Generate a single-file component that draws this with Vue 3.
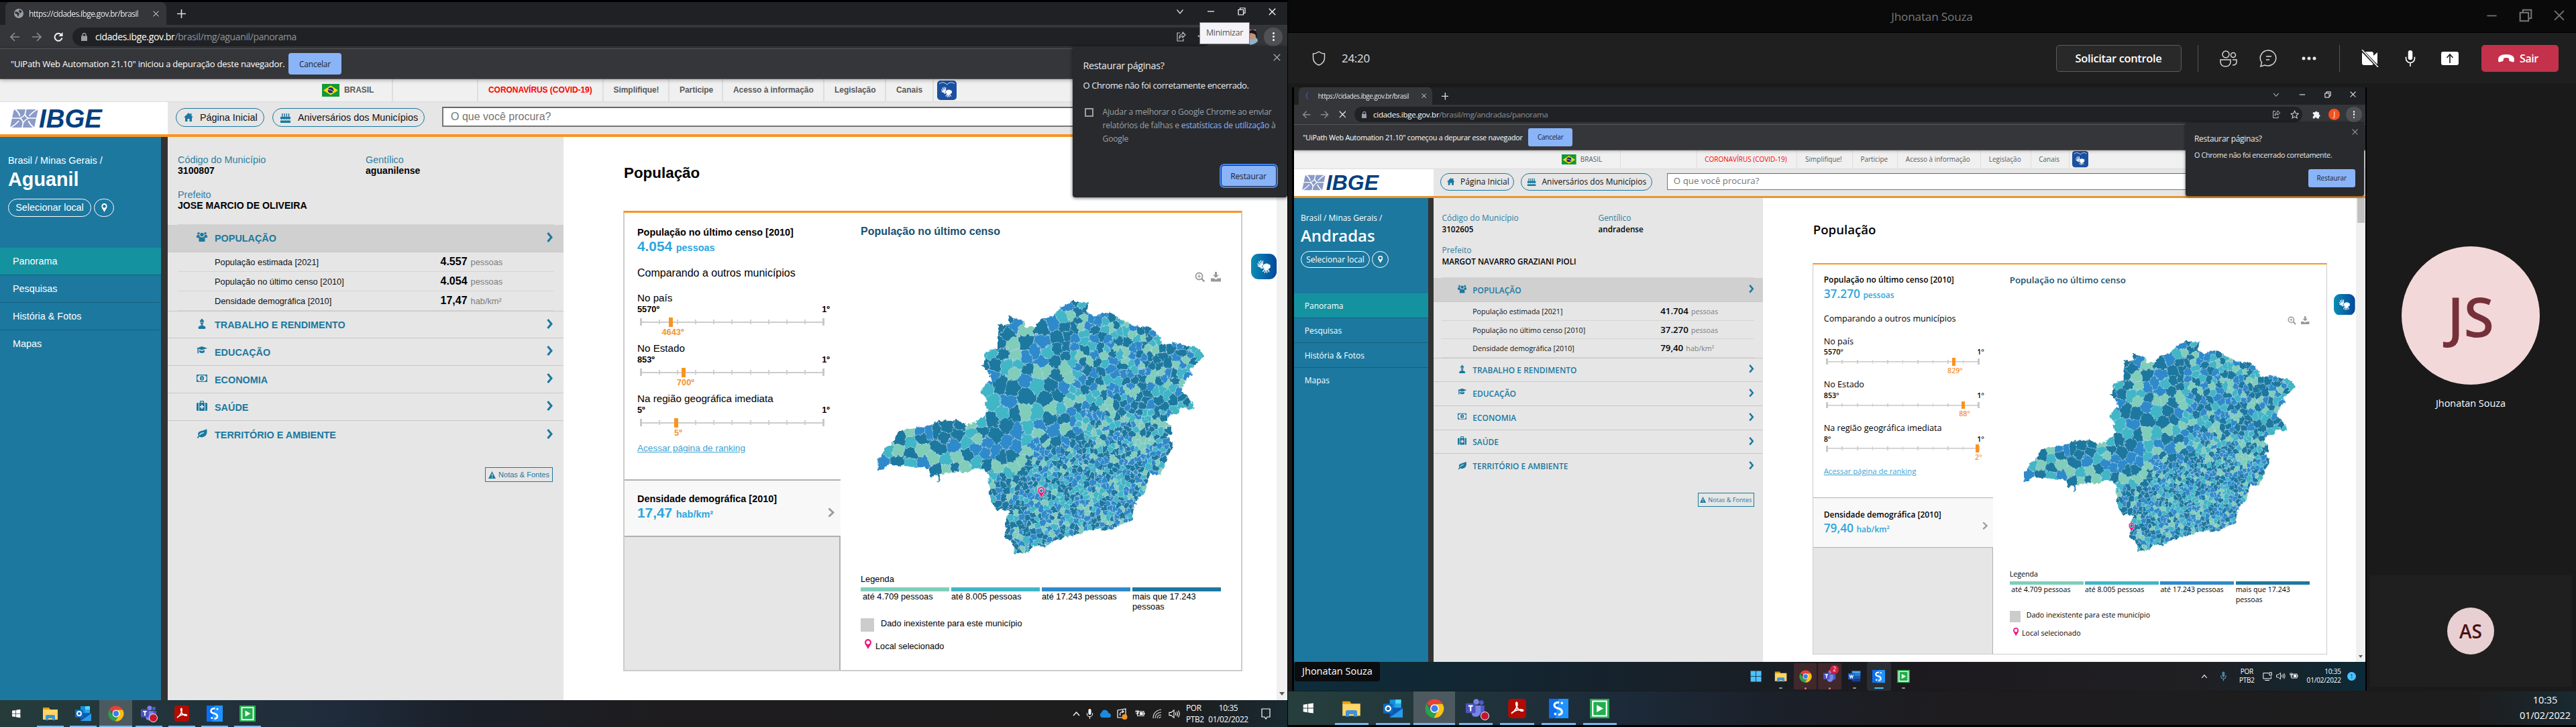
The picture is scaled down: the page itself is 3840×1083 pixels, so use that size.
<script setup>
const pages = [
  {
    id: 'aguanil',
    tab: 'https://cidades.ibge.gov.br/brasil',
    path: '/brasil/mg/aguanil/panorama',
    loading: false,
    info: '"UiPath Web Automation 21.10" iniciou a depuração deste navegador.',
    gov: [586, 127, 186.5, 98.5, 80, 151, 92, 70.6],
    city: 'Aguanil',
    code: '3100807',
    people: 'aguanilense',
    mayor: 'JOSE MARCIO DE OLIVEIRA',
    stats: [['População estimada [2021]', '4.557', 'pessoas'], ['População no último censo [2010]', '4.054', 'pessoas'], ['Densidade demográfica [2010]', '17,47', 'hab/km²']],
    census: '4.054',
    density: '17,47',
    ranks: [
      { name: 'No país', from: '5570º', at: 46, value: '4643º', lab: 53 },
      { name: 'No Estado', from: '853º', at: 65, value: '700º', lab: 72 },
      { name: 'Na região geográfica imediata', from: '5º', at: 54, value: '5º', lab: 61 }
    ],
    pin: [695, 990]
  },
  {
    id: 'andradas',
    tab: 'https://cidades.ibge.gov.br/brasil',
    path: '/brasil/mg/andradas/panorama',
    loading: true,
    info: '"UiPath Web Automation 21.10" começou a depurar esse navegador',
    gov: [585, 137, 180, 99, 81, 149, 89.5, 68.5],
    city: 'Andradas',
    code: '3102605',
    people: 'andradense',
    mayor: 'MARGOT NAVARRO GRAZIANI PIOLI',
    stats: [['População estimada [2021]', '41.704', 'pessoas'], ['População no último censo [2010]', '37.270', 'pessoas'], ['Densidade demográfica [2010]', '79,40', 'hab/km²']],
    census: '37.270',
    density: '79,40',
    ranks: [
      { name: 'No país', from: '5570º', at: 229, value: '829º', lab: 235 },
      { name: 'No Estado', from: '853º', at: 246, value: '88º', lab: 252 },
      { name: 'Na região geográfica imediata', from: '8º', at: 271, value: '2º', lab: 277 }
    ],
    pin: [574, 1099]
  }
]
const govItems = ['CORONAVÍRUS (COVID-19)', 'Simplifique!', 'Participe', 'Acesso à informação', 'Legislação', 'Canais']
const nav = ['Panorama', 'Pesquisas', 'História & Fotos', 'Mapas']
const themes = [['TRABALHO E RENDIMENTO', 'worker'], ['EDUCAÇÃO', 'cap'], ['ECONOMIA', 'money'], ['SAÚDE', 'health'], ['TERRITÓRIO E AMBIENTE', 'leaf']]
const palette = ['#80cdba', '#41b6c6', '#2f8aca', '#1c789f']
const legend = ['até 4.709 pessoas', 'até 8.005 pessoas', 'até 17.243 pessoas', 'mais que 17.243 pessoas']
const dock = ['explorer', 'outlook', 'chrome', 'teams', 'acrobat', 'ess', 'play']
const dock11 = ['win11', 'explorer', 'chrome', 'teams', 'word', 'ess', 'play']

// State outline, clockwise from the northern tip
const outline = [812,331,863,338,856,372,892,384,905,375,922,371,950,376,985,397,1018,413,1045,420,1073,416,1092,432,1116,453,1120,475,1145,476,1175,470,1205,481,1235,486,1257,493,1271,514,1258,532,1240,546,1222,560,1230,582,1205,590,1198,610,1195,635,1220,655,1237,690,1215,692,1190,688,1176,709,1150,712,1135,735,1150,745,1160,775,1140,785,1160,810,1158,830,1140,850,1135,875,1118,912,1080,912,1070,935,1062,975,1035,990,1020,1030,1020,1062,985,1075,935,1097,870,1095,820,1112,775,1122,735,1137,705,1152,665,1150,655,1165,625,1178,597,1175,600,1155,585,1135,563,1120,570,1100,566,1080,572,1055,585,1035,560,1028,537,1032,518,1000,510,970,515,950,505,935,510,915,490,895,470,888,440,903,420,907,400,900,345,908,338,910,337,935,330,933,328,912,316,913,305,922,297,905,300,888,270,888,235,886,190,880,160,878,117,898,115,860,130,850,140,820,165,812,190,768,215,762,245,758,275,750,300,750,325,735,360,730,400,731,432,745,460,738,490,718,505,700,497,675,500,655,479,640,495,610,518,598,510,575,487,550,497,525,498,505,540,490,540,450,545,425,540,408,580,412,578,378,600,390,635,400,635,422,668,418,700,395,740,378,770,350]
const ring = []
for (let i = 0; i < outline.length; i += 2) ring.push([outline[i], outline[i + 1]])
const outlinePath = 'M' + ring.map(p => p.join(',')).join('L') + 'Z'

// Large municipalities: x, y, population class
const large = [790,350,2,838,345,1,830,370,3,870,392,2,798,380,0,775,390,1,735,405,2,700,420,3,755,455,3,605,410,2,572,445,3,640,470,3,700,470,2,755,490,3,715,505,1,670,500,2,640,520,2,700,535,2,560,510,3,518,508,1,530,545,3,605,512,0,610,545,1,600,570,0,680,570,0,715,562,0,780,555,0,640,595,2,550,610,3,640,650,3,730,610,3,715,660,3,755,650,3,780,625,2,800,590,0,825,640,1,765,690,1,520,670,1,580,670,2,560,705,1,600,710,3,520,730,3,530,780,3,570,745,3,680,710,1,650,760,1,645,795,1,690,745,2,740,765,2,720,725,3,780,725,3,800,775,3,745,805,3,700,800,3,680,775,0,610,770,2,580,805,2,600,815,2,500,840,2,530,835,2,555,855,3,500,880,3,435,845,3,400,780,3,335,820,3,320,765,3,360,750,3,410,745,3,350,790,3,270,790,3,235,805,1,195,790,3,155,832,1,185,833,0,135,870,2,185,868,3,235,842,3,230,873,1,280,870,2,310,860,0,360,865,1,395,855,0,325,895,3,390,890,3,360,890,0,420,890,0,300,765,2,265,765,2,228,765,0,450,770,1,445,748,0,485,770,3,480,735,1,470,790,0,460,825,2,465,875,1,580,910,1,540,885,0,600,885,0,635,905,3,630,870,0,655,835,0,700,840,2,920,400,1,945,385,3,885,430,3,880,460,2,850,495,3,905,490,3,815,420,3,810,460,2,1000,470,3,995,430,1,1050,435,3,1095,440,2,1035,460,1,960,490,0,950,530,2,940,560,2,895,535,3,855,560,3,930,595,1,890,640,1,880,690,3,850,680,2,830,660,0,915,690,0,960,680,3,940,645,2,1050,590,3,1150,490,3,1190,505,3,1145,540,3,1225,510,2,1250,515,1,1105,530,3,1110,665,3,1165,665,3,1210,670,3,1150,712,2,1055,770,3,1160,620,1,1200,610,0,1190,570,1,1015,540,1,995,535,0,1075,490,0,1040,510,3,1145,765,3,1140,820,2,1130,860,3,1100,890,3,810,1015,3,770,1035,0,900,1060,3,980,1050,3,820,1065,2,575,965,3,540,1010,3,1110,600,3,1070,640,3]
// Points that keep smaller cells out of the widest territories
const wide = [640, 650, 46, 550, 610, 40, 725, 630, 38, 335, 815, 42, 400, 780, 36, 435, 845, 36, 570, 445, 34, 640, 470, 34, 530, 540, 38, 700, 430, 30, 755, 470, 32, 700, 535, 30, 600, 710, 34, 680, 570, 32, 745, 805, 26, 1145, 535, 30, 1110, 665, 28, 1165, 665, 28, 880, 690, 24, 960, 680, 24, 1000, 470, 28, 950, 545, 28, 930, 595, 26, 855, 570, 24, 780, 725, 24, 1050, 590, 22, 550, 850, 28, 580, 910, 26]

function inside(x, y) {
  let c = false
  for (let i = 0, j = ring.length - 1; i < ring.length; j = i++) {
    const [xi, yi] = ring[i], [xj, yj] = ring[j]
    if ((yi > y) !== (yj > y) && x < ((xj - xi) * (y - yi)) / (yj - yi) + xi) c = !c
  }
  return c
}
let state = 4711
const rnd = () => {
  state = (state * 1664525 + 1013904223) % 4294967296
  return state / 4294967296
}
const reach = (x, y) => (x < 500 ? 32 : x < 800 && y < 770 ? 27 : y > 790 && x > 660 ? 15 : 20)
const seeds = []
for (let i = 0; i < large.length; i += 3) seeds.push({ x: large[i], y: large[i + 1], c: large[i + 2], r: reach(large[i], large[i + 1]) })
const blocked = (x, y) => {
  for (let i = 0; i < wide.length; i += 3) if (Math.hypot(wide[i] - x, wide[i + 1] - y) < wide[i + 2]) return true
  return false
}
const gap = (x, y) => {
  if (x < 500) return 34
  if (y > 800 && x > 640) return 12.3
  if (y > 920) return 13.5
  if (x > 850 && y > 700) return 14
  if (x > 940) return 17.5
  if (x > 780) return 21
  return 32
}
for (let k = 0; k < 26000 && seeds.length < 900; k++) {
  const x = 115 + rnd() * 1156, y = 330 + rnd() * 848, q = rnd()
  if (!inside(x, y) || blocked(x, y)) continue
  const g = gap(x, y)
  if (seeds.some(s => Math.hypot(s.x - x, s.y - y) < Math.max(g, s.r))) continue
  const w = x > 640 && y > 820 ? [0.15, 0.35, 0.65] : x < 780 && y < 800 ? [0.07, 0.2, 0.45] : [0.18, 0.4, 0.68]
  seeds.push({ x, y, c: q < w[0] ? 0 : q < w[1] ? 1 : q < w[2] ? 2 : 3, r: 0 })
}
// Each cell is a box cut by the bisectors towards its nearest neighbours
const cells = seeds.map(s => {
  let poly = [[s.x - 90, s.y - 90], [s.x + 90, s.y - 90], [s.x + 90, s.y + 90], [s.x - 90, s.y + 90]]
  const near = seeds.filter(o => o !== s && Math.abs(o.x - s.x) < 180 && Math.abs(o.y - s.y) < 180)
    .sort((a, b) => Math.hypot(a.x - s.x, a.y - s.y) - Math.hypot(b.x - s.x, b.y - s.y)).slice(0, 40)
  for (const o of near) {
    const dx = o.x - s.x, dy = o.y - s.y, m = (o.x * o.x + o.y * o.y - s.x * s.x - s.y * s.y) / 2
    const f = p => p[0] * dx + p[1] * dy - m
    const out = []
    for (let i = 0; i < poly.length; i++) {
      const a = poly[i], b = poly[(i + 1) % poly.length], fa = f(a), fb = f(b)
      if (fa <= 0) out.push(a)
      if ((fa < 0 && fb > 0) || (fa > 0 && fb < 0)) {
        const t = fa / (fa - fb)
        out.push([a[0] + (b[0] - a[0]) * t, a[1] + (b[1] - a[1]) * t])
      }
    }
    poly = out
  }
  return { d: 'M' + poly.map(p => p[0].toFixed(1) + ',' + p[1].toFixed(1)).join('L') + 'Z', c: palette[s.c] }
})
</script>

<template>
  <div class="wall">
    <svg class="defs" width="0" height="0" aria-hidden="true">
      <defs>
        <clipPath id="mg"><path :d="outlinePath" /></clipPath>
        <filter id="wiggle" x="-2%" y="-2%" width="104%" height="104%">
          <feTurbulence type="fractalNoise" baseFrequency=".07" numOctaves="3" seed="8" result="n" />
          <feDisplacementMap in="SourceGraphic" in2="n" scale="17" xChannelSelector="R" yChannelSelector="G" />
        </filter>
        <linearGradient id="sea" x1="0" x2="1"><stop offset="0" stop-color="#0a8db5" /><stop offset="1" stop-color="#04479b" /></linearGradient>
      </defs>
      <symbol id="win" viewBox="0 0 24 24"><path fill="#fff" d="M4 6.2l7-1v6.3H4zM12 5l8.500-1.200v7.700H12zM4 12.500h7v6.300l-7-1zM12 12.500h8.500v7.700L12 19z" /></symbol>
      <symbol id="win11" viewBox="0 0 24 24"><path fill="#4cc2ff" d="M2 2h9.500v9.500H2zM12.500 2H22v9.500h-9.500zM2 12.500h9.500V22H2zM12.500 12.500H22V22h-9.500z" /></symbol>
      <symbol id="explorer" viewBox="0 0 24 24"><path fill="#e8a007" d="M1 3h9l2 3H1z" /><path fill="#ffd667" d="M1 6h22v15H1z" /><path fill="#3b93dd" d="M5 22v-6q0-2 2-2h10q2 0 2 2v6h-4v-3H9v3z" /></symbol>
      <symbol id="outlook" viewBox="0 0 24 24"><path fill="#1490df" d="M8 1h14v14H8z" /><path fill="#50d9ff" d="M15 1h7v5h-7z" /><path fill="#28a8ea" d="M15 6h7v5h-7z" /><path fill="#0a5ab0" d="M8 11h16v12H8z" /><path fill="#2b9bea" d="M24 12v11H8z" /><rect x="0" y="6" width="12" height="12" rx="1" fill="#0f6cbd" /><circle cx="6" cy="12" r="3" fill="none" stroke="#fff" stroke-width="1.800" /></symbol>
      <symbol id="chrome" viewBox="0 0 24 24"><path fill="#e54335" d="M12 12L2 6.200A11.500 11.500 0 0 1 12 .5a11.500 11.500 0 0 1 10 6H12z" /><path fill="#2ca14b" d="M2 6.200A11.500 11.500 0 0 0 11 23.500L16 14 7 14.500z" /><path fill="#fbc116" d="M22 6.500A11.500 11.500 0 0 1 11 23.500l6-10.500-3-6.500z" /><circle cx="12" cy="12" r="5.400" fill="#fff" /><circle cx="12" cy="12" r="4.200" fill="#3d7bf0" /></symbol>
      <symbol id="teams" viewBox="0 0 26 26"><circle cx="21" cy="5" r="3" fill="#5059c9" /><circle cx="14" cy="4" r="3.800" fill="#7b83eb" /><path fill="#5059c9" d="M17 9h8v8q-1 4-5 3z" /><path fill="#7b83eb" d="M8 9h12v9q-1 6-6.500 6T8 19z" /><rect x="0" y="6" width="13" height="13" rx="1" fill="#4b53bc" /><path d="M3.500 9.500h6M6.500 9.500v7" stroke="#fff" stroke-width="1.900" /></symbol>
      <symbol id="acrobat" viewBox="0 0 24 24"><rect x="1" y="0" width="22" height="24" rx="4" fill="#b30b00" /><path fill="none" stroke="#fff" stroke-width="1.600" d="M5 18c5-3 8-9 7-13-.8-1.500-2 0-1 3 1 4 4 7 8 7 1.500-.5 0-2-3-1.700-4 .2-8 1.700-11 4.700z" /></symbol>
      <symbol id="ess" viewBox="0 0 24 24"><path fill="#0a6ff0" d="M0 0h24v24H0z" /><path fill="#1f93ff" d="M12 0h12v24H8z" /><path fill="none" stroke="#fff" stroke-width="2.600" d="M12.500 4.300C5 4.300 4.800 10.500 11 11.700S18 19.500 11.500 19.700M16 4v2.600M7.700 17.200V20" /></symbol>
      <symbol id="play" viewBox="0 0 24 24"><path fill="#21ae4c" d="M0 0h24v24H0z" /><path fill="none" stroke="#fff" stroke-width="1.800" d="M3.500 3h17v18h-17z" /><path fill="#fff" d="M8.500 7.500l8 4.500-8 4.500z" /></symbol>
      <symbol id="word" viewBox="0 0 24 24"><path fill="#41a5ee" d="M7 2h16v5H7z" /><path fill="#2b7cd3" d="M7 7h16v5H7z" /><path fill="#185abd" d="M7 12h16v5H7z" /><path fill="#103f91" d="M7 17h16v5H7z" /><rect x="0" y="6" width="12" height="12" rx="1" fill="#185abd" /><path fill="none" stroke="#fff" stroke-width="1.400" d="M2.500 9l1.800 6L6 10l1.700 5 1.800-6" /></symbol>
      <symbol id="mic" viewBox="0 0 16 24"><rect x="5" y="1" width="6" height="13" rx="3" /><path fill="none" stroke="currentColor" stroke-width="1.500" d="M2 10v2a6 6 0 0 0 12 0v-2M8 18v5" /></symbol>
      <symbol id="vol" viewBox="0 0 24 24"><path fill="none" stroke="currentColor" stroke-width="1.500" d="M2 9h4l6-5v16l-6-5H2zM15 9q2 3 0 6M18 7q3.500 5 0 10M21 5q5 7 0 14" /></symbol>
      <symbol id="bat" viewBox="0 0 24 24"><path fill="none" stroke="currentColor" stroke-width="1.600" d="M7 7h14v10H7zM22.500 10v4M4 4v4M8 4v3M2 8h7v3q-3 4-5 0" /><path fill="currentColor" d="M12 9h7v6h-7z" /></symbol>
      <symbol id="hands" viewBox="0 0 24 24"><g stroke="#fff" stroke-linecap="round" stroke-width="1.500" fill="none"><path d="M6 11L2 7.500M7 9.500L4 4M8.500 9L7 2.500M10 9l.3-6M5.500 12.500L2.500 11M13.500 16l-3 4M15 17l-1.500 5M16.500 17l.5 5M18 16l2.500 4.500M11 14.500H7.500" /></g><path fill="#fff" d="M5 10.500Q8 7 11 8.500l-2.500 3 1.500 2.700q-4 1-5-3.700zM11 9.500q5-4 9-1l2.500 1v4.500L19.500 16q-3 3-6.500 1L11.500 13.500l-2-1.500z" /></symbol>
      <symbol id="worker" viewBox="0 0 16 16"><path d="M5 5a3 3 0 0 1 1.500-3l.5 2V1h2v3l.5-2A3 3 0 0 1 11 5v.8H5zM5.500 6.500h5L9 10H7zM8 10l5 2.500q1 3.500-1 3.500H4q-2 0-1-3.500z" /></symbol>
      <symbol id="cap" viewBox="0 0 16 16"><path d="M8 1l8 2.700-8 2.800L3 4.800V11l-1 .8-.6-.8V4.200L0 3.700zM4 6.500l4 1.500 4-1.500v3Q8 12.500 4 9.500z" /></symbol>
      <symbol id="money" viewBox="0 0 16 16"><path fill-rule="evenodd" d="M0 2h16v11H0zM1.200 5v5q1.800 0 1.800 2h10q0-2 1.800-2V5Q13 5 13 3.200H3Q3 5 1.200 5zM8 4a3 3.500 0 1 1 0 7 3 3.500 0 0 1 0-7zm-.8 1.500v1l.5-.2v2.500h-.6v.8h2v-.8h-.5V5.500z" /></symbol>
      <symbol id="health" viewBox="0 0 16 16"><path fill-rule="evenodd" d="M5 3V1q0-1 1-1h4q1 0 1 1v2h1v12H4V3zm1.200 0h3.600V1.200H6.200zM7 6v2H5v2h2v2h2v-2h2V8H9V6zM3 3v12H1.500Q0 15 0 13.500v-9Q0 3 1.500 3zM13 3h1.500Q16 3 16 4.500v9q0 1.500-1.500 1.500H13z" /></symbol>
      <symbol id="leaf" viewBox="0 0 16 16"><path fill-rule="evenodd" d="M15 1q2 8-3 11-4 2.500-8 .5L2 15l-1.500-.7L3 11Q0 6 7 4q5-1 8-3zM4.500 10.500Q7 7.500 11 7V6q-5 .3-7 3.500z" /></symbol>
      <symbol id="crowd" viewBox="0 0 16 16"><circle cx="3" cy="2.800" r="1.800" /><circle cx="13" cy="2.800" r="1.800" /><circle cx="8" cy="4.500" r="2.700" /><path d="M0 9V6q1-1.500 4-1 0 2 1.500 3L4 9.500zM16 9V6q-1-1.500-4-1 0 2-1.500 3L12 9.500zM3.500 15V11q0-3 2.500-3 2 1 4 0 2.500 0 2.500 3v4z" /></symbol>
      <symbol id="pin" viewBox="0 0 12 18"><path fill-rule="evenodd" d="M6 0a6 6 0 0 1 6 6q0 3-3 6.500L6 18l-3-5.500Q0 9 0 6a6 6 0 0 1 6-6zm0 2.700a3.300 3.300 0 1 0 0 6.600 3.300 3.300 0 0 0 0-6.600z" /></symbol>
      <symbol id="x" viewBox="0 0 10 10"><path fill="none" stroke="currentColor" stroke-width="1.100" d="M.7.7l8.600 8.600M9.300.7L.7 9.300" /></symbol>
      <symbol id="restore" viewBox="0 0 12 12"><path fill="none" stroke="currentColor" stroke-width="1.200" d="M1 3.500h7.500V11H1zM3.500 3.500V1H11v7.500H8.500" /></symbol>
      <symbol id="minus" viewBox="0 0 12 12"><path stroke="currentColor" stroke-width="1.200" d="M1 6h10" /></symbol>
    </svg>

    <div class="monitor left">
      <template v-for="p in pages" :key="p.id">
        <Teleport defer to="#shared" :disabled="p.id === 'aguanil'">
          <div class="desk" :class="p.id">
            <div class="tabs ui">
              <div class="tab">
                <svg v-if="!p.loading" width="14" height="14" viewBox="0 0 14 14"><circle cx="7" cy="7" r="7" fill="#9aa0a6" /><path fill="#35363a" d="M2 4l4 1 2 3-2 4-2-4-3-1zM8 1l4 3-3 3-2-3z" /></svg>
                <svg v-else width="14" height="14" viewBox="0 0 14 14"><path d="M5 1Q-1 5 4 13" stroke="#3a5f9c" stroke-width="1.500" fill="none" /></svg>
                <span class="tabname">{{ p.tab }}</span>
                <svg class="tabx" width="8" height="8"><use href="#x" /></svg>
              </div>
              <svg class="plus" width="13" height="13" viewBox="0 0 13 13"><path d="M6.500 0v13M0 6.500h13" stroke="#dadce0" stroke-width="1.600" /></svg>
              <div class="wincons">
                <svg width="12" height="12" viewBox="0 0 12 12"><path d="M1.500 3.500L6 9l4.500-5.500" fill="none" stroke="#ddd" stroke-width="1.200" /></svg>
                <svg width="12" height="12"><use href="#minus" /></svg>
                <svg width="12" height="12"><use href="#restore" /></svg>
                <svg width="11" height="11"><use href="#x" /></svg>
              </div>
            </div>
            <div class="tools ui">
              <svg class="bk" width="16" height="14" viewBox="0 0 16 14"><path d="M15 7H2M8 1L2 7l6 6" fill="none" stroke="#8a8c8f" stroke-width="1.700" /></svg>
              <svg class="fw" width="16" height="14" viewBox="0 0 16 14"><path d="M1 7h13M8 1l6 6-6 6" fill="none" stroke="#8a8c8f" stroke-width="1.700" /></svg>
              <svg v-if="!p.loading" width="14" height="14" viewBox="0 0 14 14"><path d="M11.500 4A5.500 5.500 0 1 0 12.500 8.500" fill="none" stroke="#f1f3f4" stroke-width="2" /><path d="M13.500 0v6h-6z" fill="#f1f3f4" /></svg>
              <svg v-else class="stop" width="13" height="13"><use href="#x" /></svg>
              <div class="omni">
                <svg width="9" height="12" viewBox="0 0 9 12"><path d="M0 4.500h9V12H0z" fill="#9aa0a6" /><path d="M2 5V3a2.500 2.500 0 0 1 5 0v2" fill="none" stroke="#9aa0a6" stroke-width="1.300" /></svg>
                <span class="url"><b>cidades.ibge.gov.br</b>{{ p.path }}</span>
                <svg class="share" width="15" height="15" viewBox="0 0 15 15"><path d="M6 2H2v12h9v-3M14 5l-4-4v2.500Q5 4 5 10q2-3.500 5-3.500V9z" fill="none" stroke="#bdc1c6" stroke-width="1.200" /></svg>
                <svg class="star" width="16" height="16" viewBox="0 0 16 16"><path d="M8 1.500l2 4.400 4.700.5-3.500 3.200 1 4.700L8 11.900l-4.200 2.400 1-4.700L1.300 6.400 6 5.900z" fill="none" stroke="#cfd1d4" stroke-width="1.300" /></svg>
              </div>
              <svg v-if="p.loading" class="puzzle" width="15" height="15" viewBox="0 0 15 15"><path fill="#f1f3f4" d="M1 4h4a2 2 0 1 1 4 0h3v4a2 2 0 1 1 0 4v3H8a2 2 0 1 0-4 0H1v-4a2 2 0 1 0 0-4z" /></svg>
              <span v-if="p.loading" class="me">J</span>
              <svg v-else class="photo" width="24" height="24" viewBox="0 0 24 24"><path fill="#c58f78" d="M10 1h9v15h-9z" /><path fill="#14171c" d="M8 8q2-9 9-6 5 2 3 12l-2-6-6-2z" /><path fill="#8cb3c6" d="M10 15q5 2 8-2 4 1 4 5-3 5-12 6z" /></svg>
              <span class="dots"><i></i><i></i><i></i></span>
            </div>
            <div class="infobar ui"><span>{{ p.info }}</span><button>Cancelar</button></div>

            <div class="gov">
              <div class="gi first" :style="{ width: p.gov[0] + 'px' }">
                <svg width="26" height="19" viewBox="0 0 26 19"><path fill="#109a3b" d="M0 0h26v19H0z" /><path fill="#fedf00" d="M13 2.500l11 7-11 7-11-7z" /><circle cx="13" cy="9.500" r="4.300" fill="#1c2a72" /><path d="M9 8.500q4-.5 8 3" fill="none" stroke="#fff" stroke-width=".8" /></svg>
                <span>BRASIL</span>
              </div>
              <div class="gi" :style="{ width: p.gov[1] + 'px' }"></div>
              <div v-for="(g, i) in govItems" :key="g" class="gi" :class="{ red: i === 0 }" :style="{ width: p.gov[i + 2] + 'px' }">{{ g }}</div>
              <svg class="vl" width="29" height="29" viewBox="0 0 29 29"><rect width="29" height="29" rx="5" fill="#1b50a0" /><path d="M3 5q5-4 9-1l2.500 2L17 4q5-3 9 1" fill="none" stroke="#dce8fa" /><use href="#hands" x="5" y="8" width="18" height="18" /></svg>
            </div>

            <div class="head">
              <div class="logo">
                <svg width="142" height="30" viewBox="0 0 142 30"><g transform="skewX(-12)"><rect x="6" y="1" width="36" height="27" rx="2" fill="#8a9bc9" /><path d="M24 0v9M24 20v9M5 14h11M32 14h12M24 8q2 5 7 6-5 2-7 7-2-5-7-7 5-1 7-6zM8 1q6 4 9 10M41 1q-7 4-10 10M7 28q6-4 10-10M41 28q-6-4-10-10" fill="none" stroke="#fff" stroke-width="1.700" /></g><text x="43" y="28" textLength="94" lengthAdjust="spacingAndGlyphs">IBGE</text></svg>
              </div>
              <div class="hbtn a"><svg width="14" height="13" viewBox="0 0 14 13"><path d="M7 0l2.500 2.500V1h2v3.500L14 7h-2v6H8.500V9h-3v4H2V7H0z" /></svg>Página Inicial</div>
              <div class="hbtn b"><svg width="17" height="16" viewBox="0 0 17 16"><path d="M3 2h1.500v5H3zM6.300 2h1.500v5H6.300zM9.500 2H11v5H9.500zM12.700 2h1.500v5h-1.500zM1 7h15v3q-2 2-3.700 0-2 2-3.800 0-2 2-3.800 0Q3 12 1 10zM1 12q2 1.500 3.700 0 2 1.500 3.800 0 2 1.500 3.800 0 2 1.500 3.700 0v4H1z" /></svg>Aniversários dos Municípios</div>
              <div class="search">O que você procura?</div>
            </div>

            <div class="body">
              <aside>
                <div class="crumb">Brasil / Minas Gerais /</div>
                <div class="city">{{ p.city }}</div>
                <div class="pick"><span>Selecionar local</span><i><svg width="9" height="13" viewBox="0 0 12 18"><use href="#pin" /></svg></i></div>
                <nav><div v-for="(n, i) in nav" :key="n" :class="{ on: i === 0 }">{{ n }}</div></nav>
              </aside>
              <section class="data">
                <div class="facts">
                  <div class="pair"><div><em>Código do Município</em><b>{{ p.code }}</b></div><div><em>Gentílico</em><b>{{ p.people }}</b></div></div>
                  <div class="mayor"><em>Prefeito</em><b>{{ p.mayor }}</b></div>
                </div>
                <div class="theme open"><svg width="16" height="16"><use href="#crowd" /></svg><span>POPULAÇÃO</span><svg class="chev" width="10" height="15" viewBox="0 0 10 15"><path d="M1.500 1L7 7.500 1.500 14" /></svg></div>
                <div v-for="s in p.stats" :key="s[0]" class="stat"><span>{{ s[0] }}</span><b>{{ s[1] }}</b><em>{{ s[2] }}</em></div>
                <div v-for="t in themes" :key="t[0]" class="theme"><svg width="16" height="16"><use :href="'#' + t[1]" /></svg><span>{{ t[0] }}</span><svg class="chev" width="10" height="15" viewBox="0 0 10 15"><path d="M1.500 1L7 7.500 1.500 14" /></svg></div>
                <div class="notes"><svg width="11" height="11" viewBox="0 0 11 11"><path fill-rule="evenodd" d="M5.500 0L11 11H0zM5 3.500V7h1.200V3.500zM5 8v1.500h1.200V8z" /></svg>Notas &amp; Fontes</div>
              </section>
              <main>
                <h2>População</h2>
                <div class="card">
                  <div class="lcol">
                    <div class="cens">
                      <div class="ttl">População no último censo [2010]</div>
                      <div class="val">{{ p.census }} <small>pessoas</small></div>
                      <div class="comp">Comparando a outros municípios</div>
                      <div v-for="r in p.ranks" :key="r.name" class="rank">
                        <div class="rn">{{ r.name }}</div>
                        <div class="re"><span>{{ r.from }}</span><span>1º</span></div>
                        <div class="sl">
                          <i v-for="n in 11" :key="n"></i>
                          <b :style="{ left: r.at - 3 + 'px' }"></b>
                        </div>
                        <div class="rv" :style="{ marginLeft: r.lab - 46 + 'px' }">{{ r.value }}</div>
                      </div>
                      <a class="lnk">Acessar página de ranking</a>
                    </div>
                    <div class="dens">
                      <div><div class="ttl">Densidade demográfica [2010]</div><div class="val">{{ p.density }} <small>hab/km²</small></div></div>
                      <svg width="10" height="15" viewBox="0 0 10 15"><path d="M1.500 1.500L8 7.500l-6.500 6" fill="none" stroke="#999" stroke-width="2.800" /></svg>
                    </div>
                    <div class="rest"></div>
                  </div>
                  <div class="rcol">
                    <div class="mt">População no último censo</div>
                    <div class="mi">
                      <svg width="15" height="15" viewBox="0 0 15 15"><circle cx="6.500" cy="6.500" r="5" fill="none" stroke="#999" stroke-width="1.800" /><path d="M10 10l4.500 4.500" stroke="#999" stroke-width="2.400" /><path d="M4 6.500h5M6.500 4v5" stroke="#999" stroke-width="1.200" /></svg>
                      <svg width="15" height="15" viewBox="0 0 15 15"><path fill="#999" d="M6 0h3v4.500h3L7.500 9 3 4.500h3zM0 9.500h4.500l3 2 3-2H15v5H0z" /></svg>
                    </div>
                    <svg class="map" width="490.800" height="383" viewBox="110 325 1166 858" preserveAspectRatio="none">
                      <g filter="url(#wiggle)"><g clip-path="url(#mg)" stroke="#b5d6e8" stroke-width="1.400"><path v-for="(c, i) in cells" :key="i" :d="c.d" :fill="c.c" /></g></g>
                      <g :transform="`translate(${p.pin[0] - 14},${p.pin[1] - 38})`"><use href="#pin" width="28" height="38" fill="#f0147c" stroke="#fff" stroke-width=".8" /></g>
                    </svg>
                    <div class="lg">Legenda</div>
                    <div class="bars"><div v-for="(l, i) in legend" :key="l"><i :style="{ background: palette[i] }"></i><span>{{ l }}</span></div></div>
                    <div class="nd"><i></i>Dado inexistente para este município</div>
                    <div class="loc"><svg width="10" height="15"><use href="#pin" fill="#f0147c" /></svg>Local selecionado</div>
                  </div>
                </div>
              </main>
              <div class="scroll"><i></i><b></b></div>
            </div>

            <div v-if="!p.loading" class="taskbar ui">
              <div class="tk start"><svg width="18" height="18" viewBox="0 0 24 24"><use href="#win" /></svg></div>
              <div v-for="d in dock" :key="d" class="tk" :class="d"><svg width="24" height="24"><use :href="'#' + d" /></svg></div>
              <div class="tray">
                <svg width="11" height="8" viewBox="0 0 11 8"><path d="M1 7l4.500-5L10 7" fill="none" stroke="#fff" stroke-width="1.300" /></svg>
                <svg class="wt" width="11" height="17"><use href="#mic" /></svg>
                <svg width="17" height="12" viewBox="0 0 17 12"><path fill="#1a8ae0" d="M4 12a4 4 0 0 1-1-7.500Q5-1 10 1q3 1 3 4 4 .5 4 4 0 3-3 3z" /></svg>
                <svg width="17" height="17" viewBox="0 0 17 17"><path fill="none" stroke="#fff" stroke-width="1.200" d="M2 3l12-2v13H2zM6 11q-2-5 4-6M9 3l2 2-2 2" /><circle cx="12.500" cy="13" r="4" fill="#f7931e" /></svg>
                <svg class="wt" width="18" height="16"><use href="#bat" /></svg>
                <svg width="15" height="15" viewBox="0 0 15 15"><path fill="none" stroke="#ddd" stroke-width="1.200" d="M2 14Q2 3 14 1M5 14q0-8 9-9M8 14q0-5 6-5M11 14q0-2 3-2" /></svg>
                <svg class="wt" width="18" height="17"><use href="#vol" /></svg>
              </div>
              <div class="lang">POR<br>PTB2</div>
              <div class="clock">10:35<br>01/02/2022</div>
              <svg class="nt" width="14" height="17" viewBox="0 0 14 17"><path d="M1 1h12v12H9l-2 3-2-3H1z" fill="none" stroke="#fff" stroke-width="1.200" /></svg>
            </div>
            <div v-else class="taskbar w11 ui">
              <div v-for="d in dock11" :key="d" class="tk" :class="d"><svg width="23" height="23"><use :href="'#' + d" /></svg><em v-if="d === 'teams'">2</em></div>
              <div class="tray11">
                <svg class="t1" width="12" height="8" viewBox="0 0 11 8"><path d="M1 7l4.500-5L10 7" fill="none" stroke="#fff" stroke-width="1.300" /></svg>
                <svg class="t2" width="13" height="18"><use href="#mic" /></svg>
                <span class="lang">POR<br>PTB2</span>
                <svg width="17" height="16" viewBox="0 0 17 16"><path d="M11 2H1v10h14V8M4 15h8M12 1h4v5h-4z" fill="none" stroke="#fff" stroke-width="1.200" /></svg>
                <svg class="wt" width="18" height="17"><use href="#vol" /></svg>
                <svg class="wt" width="19" height="17"><use href="#bat" /></svg>
                <span class="clock">10:35<br>01/02/2022</span>
                <span class="badge">1</span>
              </div>
            </div>

            <svg class="float" width="38" height="38" viewBox="0 0 38 38"><rect width="38" height="38" rx="11" fill="url(#sea)" /><use href="#hands" x="8" y="8" width="22" height="22" /></svg>
            <div v-if="!p.loading" class="tip ui">Minimizar</div>
            <div class="popup ui">
              <svg class="px" width="11" height="11"><use href="#x" /></svg>
              <h3>Restaurar páginas?</h3>
              <p v-if="!p.loading">O Chrome não foi corretamente encerrado.</p>
              <p v-else>O Chrome não foi encerrado corretamente.</p>
              <div v-if="!p.loading" class="opt"><i></i><span>Ajudar a melhorar o Google Chrome ao enviar<br>relatórios de falhas e <u>estatísticas de utilização</u> à<br>Google</span></div>
              <button>Restaurar</button>
            </div>
          </div>
        </Teleport>
      </template>
    </div>

    <div class="monitor right ui">
      <div class="tbar"><span>Jhonatan Souza</span>
        <div class="tw"><svg width="17" height="17"><use href="#minus" /></svg><svg width="20" height="20"><use href="#restore" /></svg><svg width="16" height="16"><use href="#x" /></svg></div>
      </div>
      <div class="mbar">
        <svg class="shield" width="20" height="22" viewBox="0 0 20 22"><path d="M10 1q4 3 8.500 3v6q0 8-8.500 11Q1.500 18 1.500 10V4Q6 4 10 1z" fill="none" stroke="#ddd" stroke-width="1.400" /></svg>
        <span class="time">24:20</span>
        <div class="ask">Solicitar controle</div>
        <div class="g1">
          <svg width="28" height="26" viewBox="0 0 28 26"><g fill="none" stroke="#d6d6d6" stroke-width="1.500"><circle cx="10" cy="7" r="5" /><circle cx="21" cy="8" r="3.500" /><path d="M2 15h15v4q-1 6-7.500 6T2 19zM20 15h6v3q0 5-6 5" /></g></svg>
          <svg width="28" height="26" viewBox="0 0 28 26"><path d="M14 1a12 11.500 0 1 1-6 22L2 25l1.500-6A12 11.500 0 0 1 14 1zM10 10h8M10 15h5" fill="none" stroke="#d6d6d6" stroke-width="1.500" /></svg>
          <svg width="28" height="26" viewBox="0 0 28 26"><g fill="#e6e6e6"><circle cx="6" cy="13" r="2.500" /><circle cx="14" cy="13" r="2.500" /><circle cx="22" cy="13" r="2.500" /></g></svg>
        </div>
        <div class="g2">
          <svg width="28" height="26" viewBox="0 0 28 26"><path fill="#fff" d="M2 6q0-3 3-3h11q3 0 3 3v3l6-5v18l-6-5v3q0 3-3 3H5q-3 0-3-3z" /><path d="M1 0l25 26" stroke="#1f1f1f" stroke-width="4" /><path d="M2 0l24 26" stroke="#fff" stroke-width="1.500" /></svg>
          <svg width="20" height="26" viewBox="0 0 16 24" class="wt"><use href="#mic" /></svg>
          <svg width="26" height="22" viewBox="0 0 26 22"><rect width="26" height="20" y="1" rx="3" fill="#fff" /><path d="M13 18V6M8.500 10L13 5l4.500 5" fill="none" stroke="#1f1f1f" stroke-width="1.700" /></svg>
        </div>
        <div class="leave"><svg width="26" height="14" viewBox="0 0 26 14"><path fill="#fff" d="M13 1q12 0 12 8 0 4-2 3.500L18 11q-1-.5-1-4-4-2-8 0 0 3.500-1 4l-5 1.500Q1 13 1 9q0-8 12-8z" /></svg>Sair</div>
      </div>
      <div class="stage">
        <div class="sharebox"><div id="shared"></div><span class="who">Jhonatan Souza</span></div>
        <div class="people">
          <div class="ava big">JS</div>
          <div class="nm">Jhonatan Souza</div>
          <div class="tile"><div class="ava small">AS</div></div>
        </div>
      </div>
      <div class="tb2">
        <div class="tk start"><svg width="22" height="22" viewBox="0 0 24 24"><use href="#win" /></svg></div>
        <div v-for="d in dock" :key="d" class="tk" :class="d"><svg width="29" height="29"><use :href="'#' + d" /></svg></div>
        <div class="clock">10:35<br>01/02/2022</div>
      </div>
    </div>
  </div>
</template>

<style>
html, body { background: #000; overflow: hidden; }
</style>

<style scoped>
* { box-sizing: border-box; }
.wall { width: 3840px; height: 1083px; display: flex; background: #000; overflow: hidden; font-family: "Liberation Sans", sans-serif; }
.defs { position: absolute; }
.monitor { position: relative; overflow: hidden; flex: none; height: 1083px; }
.left { width: 1919px; padding-top: 3px; margin-right: 1px; }
.right { width: 1920px; background: #1a1a1a; display: flex; flex-direction: column; }
.ui { font-family: "Open Sans", "Noto Sans", sans-serif; }
svg { flex: none; display: block; }
i, em { font-style: normal; }
.wt { color: #fff; fill: #fff; }
button { border: 0; font: inherit; letter-spacing: inherit; padding: 0; }

.desk { width: 1919px; height: 1080px; position: relative; display: flex; flex-direction: column; background: #fff; overflow: hidden;
  --tabs: 34px; --gov: 33.800px; --crumb: 17px; --city-gap: 3px; --pick-gap: 12px; --pick: 27px; --nav-top: 165px; --nav: 41px; --fl: 16.500px;
  --theme: 41px; --stat: 29.130px; --notes-gap: 28px; --notes: 21.600px; --h2: 110.500px; --card: 685.500px; --h2-top: 41.500px;
  --ct: 20px; --l1: 18px; --l2: 24px; --l3: 20px; --g3: 15.500px; --g4: 18.500px; --rn: 18px; --re: 16.500px; --sl: 20px; --rv: 9.500px; --rk: 75px; --cens: 397px; --dens: 85.500px; --dp: 18px;
  --mi: 88px; --map: 130.300px; --lg: 541px; --bt: 561px; --bl: 15px; --nd: 607px; --lo: 637.500px; --bold: 700; --hb: 28px; }
.andradas { zoom: .832; width: 1920px; font-family: "Open Sans", sans-serif;
  --tabs: 31.500px; --gov: 34px; --crumb: 20px; --city-gap: 0px; --pick-gap: 8px; --pick: 31px; --nav-top: 171px; --nav: 44.400px; --fl: 19.600px;
  --theme: 43.200px; --stat: 33px; --notes-gap: 26.500px; --notes: 25px; --h2: 116.300px; --card: 701.500px; --h2-top: 41.500px;
  --ct: 18.600px; --l1: 20px; --l2: 29px; --l3: 22px; --g3: 16px; --g4: 19.500px; --rn: 20px; --re: 20px; --sl: 14px; --rv: 19px; --rk: 77.800px; --cens: 417.600px; --dens: 90.400px; --dp: 20px;
  --mi: 93px; --map: 136.500px; --lg: 549px; --bt: 570.700px; --bl: 18px; --nd: 624px; --lo: 653px; --bold: 600; --hb: 31px; }

.tabs { height: var(--tabs); flex: none; background: #202124; display: flex; align-items: stretch; padding-left: 8px; }
.tab { width: 240px; background: #35363a; border-radius: 8px 8px 0 0; display: flex; align-items: center; padding-left: 13px; color: #e8eaed; font-size: 12px; }
.tabname { width: 177px; margin-left: 8px; overflow: hidden; white-space: nowrap; letter-spacing: -.6px; mask-image: linear-gradient(90deg, #000 90%, transparent); }
.tabx { margin-left: 8px; width: 9px; height: 9px; color: #fff; overflow: visible; }
.plus { align-self: center; margin-left: 16px; }
.wincons { margin-left: auto; display: flex; gap: 34px; align-items: center; color: #fff; padding-right: 17px; padding-bottom: 6px; }
.tools { height: 36px; flex: none; background: #35363a; display: flex; align-items: center; padding: 0 7px 0 14px; border-bottom: 1px solid #5f6063; }
.bk { margin-right: 17px; }
.fw { margin-right: 17px; }
.stop { color: #e8eaed; margin-right: 1px; }
.omni { height: 28px; width: 1699px; margin-left: 14px; border-radius: 14px; background: #202124; display: flex; align-items: center; padding-left: 13px; }
.url { font-size: 14px; letter-spacing: -.38px; color: #8f9398; margin-left: 12px; white-space: nowrap; }
.url b { font-weight: 400; color: #fff; }
.share { margin-left: auto; margin-right: 17px; }
.star { margin-right: 6px; }
.puzzle { margin-left: 17px; }
.me { width: 20px; height: 20px; border-radius: 50%; background: #f4511e; color: #fff; font-size: 12px; line-height: 20px; text-align: center; margin-left: 15px; }
.photo { margin-left: 46px; }
.dots { width: 28px; height: 28px; margin-left: auto; border-radius: 50%; background: #505154; display: flex; flex-direction: column; gap: 2px; align-items: center; justify-content: center; }
.dots i { width: 3px; height: 3px; border-radius: 50%; background: #fff; }
.infobar { height: 45.300px; flex: none; background: #35363a; color: #fff; font-size: 13px; letter-spacing: -.22px; display: flex; align-items: center; padding-left: 16px; border-bottom: 1px solid #5a5458; box-shadow: 0 1px 6px rgba(0,0,0,.35); position: relative; white-space: nowrap; }
.infobar span { width: 414px; }
.andradas .infobar { letter-spacing: -.3px; }
.andradas .infobar span { width: 404px; }
.infobar button { width: 79px; height: 32px; background: #8ab4f8; color: #202124; border-radius: 4px; font-size: 12px; }

.gov { height: var(--gov); flex: none; background: #f0f0f0; display: flex; border-bottom: 1px solid #dcdcdc; color: #5a5a5a; font-size: 12px; font-weight: var(--bold); letter-spacing: -.05px; }
.gi { flex: none; border-right: 2px solid #dedede; padding-left: 15px; line-height: 32.500px; white-space: nowrap; }
.first { padding-left: 480px; display: flex; align-items: center; gap: 7px; }
.red { color: #f00; }
.andradas .gov { font-weight: 500; letter-spacing: 0; }
.andradas .gi { padding-left: 14px; }
.andradas .first { padding-left: 480px; }
.vl { margin: 2px 0 0 5px; }
.head { height: 47.900px; flex: none; background: #e6e6e6; display: flex; align-items: center; font-size: 14.400px; color: #111; }
.logo { width: 250px; height: 100%; background: #fff; padding: 10px 0 0 15px; }
.logo svg { overflow: visible; }
.logo text { font: italic 700 38px "Liberation Sans", sans-serif; fill: #00407f; }
.hbtn { height: var(--hb); border: 1.500px solid #1c789f; border-radius: 16px; display: flex; align-items: center; white-space: nowrap; padding-left: 11px; margin-top: -3px; flex: none; }
.hbtn svg { fill: #1c789f; margin-right: 10px; }
.a { width: 132px; margin-left: 12px; }
.b { width: 227px; margin-left: 12px; padding-left: 10px; }
.andradas .b { width: 236px; }
.search { width: 1222px; height: 30px; margin: -4px 0 0 26px; background: #fff; border: 2px solid #777; border-top-color: #666; padding-left: 11px; font-size: 16px; line-height: 25px; color: #757575; }

.body { flex: 1; min-height: 0; border-top: 4px solid #f99420; display: flex; }
.andradas .body { border-top-color: #ea952f; }
aside { width: 250px; border-right: 10px solid #333; background: #1c789f; color: #fff; font-size: 14.400px; position: relative; }
.crumb { padding-left: 12px; margin-top: 27px; line-height: var(--crumb); }
.city { padding-left: 12px; margin-top: var(--city-gap); font-size: 28.800px; font-weight: var(--bold); line-height: normal; }
.pick { padding-left: 12px; margin-top: var(--pick-gap); display: flex; gap: 4px; }
.pick span, .pick i { height: var(--pick); border: 1.500px solid #fff; border-radius: 16px; width: 124px; display: flex; align-items: center; justify-content: center; white-space: nowrap; }
.pick i { width: 30px; }
.pick svg { fill: #fff; }
nav { position: absolute; left: 0; right: 0; top: var(--nav-top); }
nav div { height: var(--nav); border-bottom: 1px solid #166080; padding: 0 0 0 19px; display: flex; align-items: center; }
nav div:last-child { border: 0; }
nav .on { background: #1592a0; }
.data { width: 590px; flex: none; background: #e6e6e6; font-size: 14.400px; color: #1c789f; }
.facts { margin: 0 15px; padding: 26px 0 19px; border-bottom: 1px solid #d4d4d4; }
.facts em, .facts b { display: block; line-height: var(--fl); font-weight: 400; white-space: nowrap; }
.facts em { color: #2f7f9f; }
.facts b { font-weight: var(--bold); color: #000; font-size: 14.100px; }
.pair { display: flex; }
.pair div { width: 285.500px; }
.mayor { margin-top: 19px; }
.theme { height: var(--theme); border-bottom: 1px solid #c8c8c8; display: flex; align-items: center; padding: 1px 15px 0 43px; font-weight: var(--bold); }
.theme svg { fill: #1c789f; margin-top: -4px; }
.theme span { margin: 0 0 0 11px; flex: 1; }
.theme .chev { fill: none; stroke: #1c789f; stroke-width: 3; }
.theme.open { background: #d0d0d0; }
.stat + .theme { border-top: 1px solid #c8c8c8; }
.theme:nth-last-child(2) { border-bottom: 0; }
.stat { height: var(--stat); margin: 0 15px; border-bottom: 1px solid #d4d4d4; padding-left: 55px; display: flex; align-items: baseline; line-height: calc(var(--stat) - 1px); font-size: 12.800px; color: #111; }
.stat span { width: 336.500px; }
.stat b { font-size: 16px; font-weight: var(--bold); color: #000; }
.stat em { color: #7d7d7d; margin-left: 5px; }
.notes { height: var(--notes); width: 101px; margin: var(--notes-gap) 16px 0 auto; border: 1.500px solid #1c789f; display: flex; align-items: center; justify-content: center; gap: 4px; font-size: 11px; white-space: nowrap; }
.notes svg { fill: #1c789f; }
main { width: 1063px; flex: none; padding-left: 89px; color: #000; }
h2 { margin: 0; height: var(--h2); padding: var(--h2-top) 0 0 1px; font-size: 22.400px; font-weight: var(--bold); line-height: normal; }
.andradas h2 { font-weight: 550; }
.card { width: 922.500px; height: var(--card); border: 2px solid #ccc; border-top: 3px solid #f99420; display: flex; }
.lcol { width: 322px; flex: none; display: flex; flex-direction: column; }
.cens { height: var(--cens); padding: var(--ct) 0 0 19px; }
.ttl { font-size: 14.400px; font-weight: var(--bold); line-height: var(--l1); white-space: nowrap; }
.val { font-size: 20.800px; font-weight: var(--bold); line-height: var(--l2); color: #2ba6de; }
.val small { font-size: 14.400px; }
.andradas .val { font-weight: 550; }
.comp { font-size: 16px; line-height: var(--l3); margin: var(--g3) 0 var(--g4); white-space: nowrap; }
.rank { height: var(--rk); width: 287px; }
.rn { font-size: 15.200px; line-height: var(--rn); }
.re { display: flex; justify-content: space-between; font-size: 12.800px; font-weight: var(--bold); line-height: var(--re); }
.andradas .rn, .andradas .comp { font-size: 15.200px; }
.andradas .re { font-weight: 550; font-size: 13px; }
.sl { height: var(--sl); width: 275px; margin-left: 4px; position: relative; display: flex; align-items: center; justify-content: space-between; background: linear-gradient(#ccc, #ccc) center / 100% 2px no-repeat; }
.sl i { width: 2px; height: 7px; background: #d0d0d0; }
.sl i:first-child, .sl i:nth-last-child(2) { width: 3px; height: 11px; background: #c8c8c8; }
.sl b { position: absolute; top: calc(50% - 7px); width: 6px; height: 14px; background: #f99420; }
.rv { width: 92px; text-align: center; font-size: 12.800px; font-weight: var(--bold); line-height: var(--rv); color: #f49332; }
.andradas .rv { font-weight: 550; }
.lnk { display: block; font-size: 13.600px; line-height: 16px; color: #3ba3d3; text-decoration: underline; }
.andradas .lnk { line-height: 20px; }
.dens { height: var(--dens); border: solid #b0b0b0; border-width: 2px 0; background: #f8f8f8; padding: var(--dp) 9px 0 19px; display: flex; justify-content: space-between; }
.dens svg { margin-top: 22px; }
.rest { flex: 1; background: #e6e6e6; border-right: 2px solid #b0b0b0; }
.rcol { flex: 1; position: relative; font-size: 12.800px; }
.rcol > * { position: absolute; left: 30px; margin-top: -3px; }
.mt { top: 21px; font-size: 16px; line-height: 20px; font-weight: var(--bold); color: #17506f; }
.andradas .mt { font-weight: 550; }
.rcol .mi { top: var(--mi); left: 528px; display: flex; gap: 9px; padding-top: 3px; }
.rcol .map { top: var(--map); left: 53px; }
.lg { top: var(--lg); }
.bars { top: var(--bt); display: flex; gap: 3px; width: 537px; }
.bars div { flex: 1; }
.bars i { display: block; height: 6px; }
.bars span { display: block; line-height: var(--bl); }
.bars div:first-child span { padding-left: 3px; }
.nd { top: var(--nd); display: flex; gap: 10px; white-space: nowrap; line-height: 16px; }
.nd i { width: 20px; height: 20px; background: #ccc; }
.loc { top: var(--lo); display: flex; gap: 6px; padding-left: 6px; align-items: center; line-height: 21px; }
.loc svg { margin-top: -6px; }
.scroll { flex: 1; background: #f0f0f0; position: relative; }
.scroll i { display: none; }
.andradas .scroll i { display: block; margin: 0 2px; height: 45px; background: #c1c1c1; }
.scroll b { position: absolute; bottom: 7px; left: 4px; border: 4px solid transparent; border-top: 5px solid #555; border-bottom: 0; }

.taskbar { height: 40px; flex: none; position: relative; background: linear-gradient(90deg, #263c3b 0, #1f2b3b 26%, #1b2029 36%, #1e1c1e 52%, #1d1d1e 92%, #192a31); display: flex; color: #fff; }
.tk { width: 49px; display: flex; align-items: center; justify-content: center; position: relative; flex: none; }
.tk::after { content: ""; position: absolute; left: 4.500px; right: 4.500px; bottom: 0; height: 2px; background: #76b9ed; }
.start { width: 47px; margin-right: 3px; }
.start::after { display: none; }
.chrome { background: #4c5a5f; }
.chrome::after { left: 0; right: 0; }
.teams::before { content: ""; position: absolute; right: 11px; bottom: 7px; width: 11px; height: 11px; border-radius: 50%; background: #c4152f; border: 1px solid #fff; z-index: 1; }
.tray { margin-left: auto; display: flex; align-items: center; width: 160px; justify-content: space-between; }
.lang, .clock { font-size: 11.800px; line-height: 17px; letter-spacing: -.3px; padding-top: 3px; text-align: center; }
.taskbar > .lang { text-align: left; margin-left: 9px; width: 32px; }
.taskbar > .clock { width: 62px; margin: 0 18px 0 0; white-space: nowrap; }
.nt { align-self: center; margin-right: 25px; }
.w11 { height: 51px; background: linear-gradient(90deg, #0d2c3b 0, #16222c 30%, #1c1a1e 58%, #201f22 84%, #122630 96%, #0c2a38); padding-left: 806px; }
.w11 .tk { width: 44px; border-radius: 4px; }
.w11 .tk::after { left: 19px; right: 19px; bottom: 3px; height: 3px; border-radius: 2px; background: #9a9a9a; }
.w11 .win11::after { display: none; }
.w11 .chrome, .w11 .teams { background: #40282c; border: solid #1c1d22; border-width: 3px 1px; }
.w11 .chrome::after, .w11 .teams::after { background: #ef7a7a; bottom: 0; }
.w11 .teams::before { display: none; }
.w11 .ess { background: #2a2d33; }
.w11 .ess::after { left: 14px; right: 14px; background: #4cc2ff; }
.tk em { position: absolute; right: 5px; top: 4px; width: 15px; height: 15px; border-radius: 50%; background: #d0213d; font-size: 10px; line-height: 15px; text-align: center; }
.tray11 { margin-left: auto; display: flex; align-items: center; padding-right: 17px; }
.t2 { color: #8ad; fill: #48a; margin: 0 17px 0 21px; }
.tray11 .lang { width: 38px; font-size: 12px; line-height: 16px; margin-right: 10px; padding: 0; }
.tray11 svg + svg.wt { margin-left: 5px; }
.tray11 .clock { width: 76px; font-size: 12px; line-height: 16px; text-align: right; padding: 0; letter-spacing: -.2px; }
.badge { width: 16px; height: 16px; border-radius: 50%; background: #4cc2ff; color: #123; font-size: 10px; line-height: 16px; text-align: center; margin-left: 11px; }

.float { position: absolute; right: 16px; top: 375px; }
.andradas .float { top: 370px; right: 19px; }
.tip { position: absolute; left: 1788px; top: 30px; width: 75px; height: 33px; background: #f3f3f9; border: 1.500px solid #767676; color: #575757; font-size: 12.500px; letter-spacing: -.3px; line-height: 30px; text-align: center; z-index: 2; }
.popup { position: absolute; left: 1598.500px; top: 66px; width: 320px; height: 225px; background: #292a2d; border-radius: 4px; box-shadow: 0 1px 5px rgba(0,0,0,.6); color: #e8eaed; padding: 19px 16px; z-index: 1; white-space: nowrap; }
.popup h3 { margin: 0; font-size: 14.400px; letter-spacing: -.35px; font-weight: 400; line-height: 20px; }
.popup p { margin: 9px 0 0; font-size: 13px; letter-spacing: -.4px; line-height: 20px; }
.px { position: absolute; right: 10px; top: 11px; color: #aaa; }
.opt { display: flex; color: #9aa0a6; font-size: 12.200px; letter-spacing: -.22px; line-height: 20px; margin-top: 20px; }
.opt i { width: 13px; height: 13px; border: 2px solid #9aa0a6; margin: 4px 14px 0 2px; }
.opt u { color: #8ab4f8; text-decoration: none; }
.popup button { position: absolute; right: 17px; bottom: 17px; width: 81px; height: 30px; border-radius: 4px; background: #8ab4f8; color: #202124; font-size: 12px; letter-spacing: -.1px; box-shadow: 0 0 0 1px #292a2d, 0 0 0 3px #4285f4; }
.andradas .popup { left: 1597px; top: 63.700px; height: 131px; }
.andradas .popup button { width: 84px; height: 32px; right: 16px; bottom: 16px; box-shadow: none; }

.tbar { height: 49px; flex: none; background: #0a0a0a; border-bottom: 1px solid #000; color: #777; font-size: 17.200px; letter-spacing: -.2px; position: relative; text-align: center; line-height: 49px; }
.tw { position: absolute; right: 17px; top: 13px; display: flex; align-items: center; gap: 32px; }
.tw svg { overflow: visible; }
.mbar { height: 75px; flex: none; background: #1f1f1f; display: flex; align-items: center; color: #fff; padding-left: 36px; }
.time { margin-left: 24px; font-size: 17px; letter-spacing: -.3px; color: #e0e0e0; flex: 1; }
.ask { width: 187px; height: 40px; border: 1px solid #5c5c5c; border-radius: 5px; background: #292929; font-size: 16.500px; font-weight: 600; letter-spacing: -.35px; line-height: 38px; text-align: center; }
.g1, .g2 { height: 40px; border-left: 1px solid #555; display: flex; align-items: center; }
.g1 { margin-left: 24px; padding-left: 31px; gap: 32px; width: 211.500px; }
.g2 { padding-left: 31px; gap: 36px; width: 212px; }
.leave { width: 115px; height: 40px; margin-right: 26px; background: #c4314b; border-radius: 5px; display: flex; align-items: center; gap: 7px; padding-left: 24px; font-size: 16px; font-weight: 600; letter-spacing: -.4px; }
.stage { flex: 1; min-height: 0; display: flex; padding: 6px 0 0 6px; }
.sharebox { width: 1602px; height: 899px; background: #000; padding-left: 3px; position: relative; flex: none; }
.who { position: absolute; left: 4px; bottom: 14px; height: 29px; width: 127px; background: #0b0c0e; border-radius: 4px; color: #fff; font-size: 14.500px; line-height: 28px; text-align: center; }
.people { flex: 1; display: flex; flex-direction: column; align-items: center; padding: 237px 2px 0 0; color: #fff; }
.ava { border-radius: 50%; display: flex; align-items: center; justify-content: center; }
.big { width: 206px; height: 206px; background: #f3d8da; color: #76303a; font-size: 82px; font-weight: 600; }
.small { width: 70px; height: 70px; background: #e8d0d2; color: #4a1015; font-size: 28px; font-weight: 600; }
.nm { margin-top: 17px; line-height: 22px; font-size: 14.400px; font-weight: 500; }
.tile { margin-top: auto; margin-bottom: 7px; width: 301px; height: 166px; background: #1f1f1f; display: flex; align-items: center; justify-content: center; }
.tb2 { height: 50px; flex: none; margin-bottom: 3px; background: linear-gradient(90deg, #263f3d 0, #1c2a39 26%, #1b2029 38%, #1e1c1e 52%, #1d1d1e 92%, #192a31); display: flex; color: #fff; box-shadow: 0 3px 0 #000; }
.tb2 .tk { width: 61.700px; }
.tb2 .tk::after { left: 5.500px; right: 5.500px; height: 3px; }
.tb2 .start { width: 60px; margin-right: 4px; }
.tb2 .chrome::after { left: 0; right: 0; }
.tb2 .clock { margin-left: auto; width: 92px; font-size: 14.500px; line-height: 23px; letter-spacing: -.1px; padding: 1px 0 0; }
</style>
